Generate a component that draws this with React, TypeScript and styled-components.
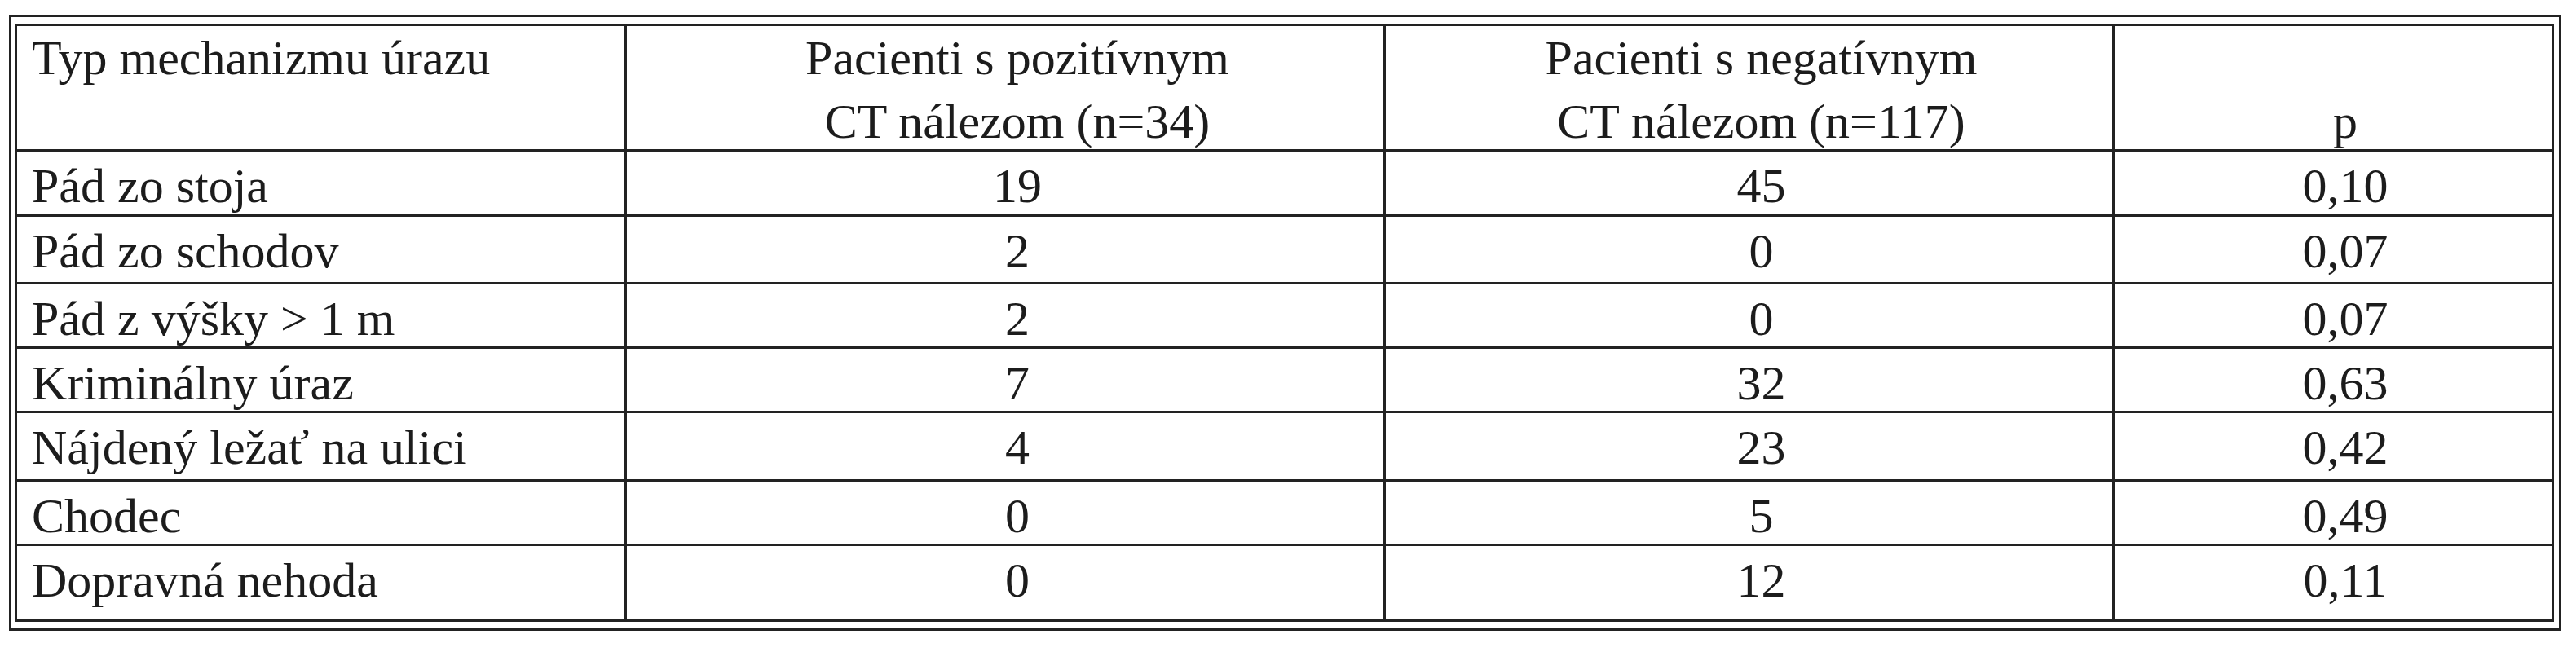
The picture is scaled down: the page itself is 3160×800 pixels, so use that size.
import React from "react";
import styled, { createGlobalStyle } from "styled-components";

const LINE = "#222";
const INK = "#1c1c1c";

// column inner widths and row inner heights, lines are 3px
const COLUMNS = [745, 928, 891, 536];
const ROWS = [151, 77, 80, 76, 76, 81, 76, 90];

const header = [
  { lines: ["Typ mechanizmu úrazu"], align: "left" as const },
  { lines: ["Pacienti s pozitívnym", "CT nálezom (n=34)"], align: "center" as const },
  { lines: ["Pacienti s negatívnym", "CT nálezom (n=117)"], align: "center" as const },
  { lines: ["p"], align: "center" as const, bottom: true },
];

const rows = [
  ["Pád zo stoja", "19", "45", "0,10"],
  ["Pád zo schodov", "2", "0", "0,07"],
  ["Pád z výšky > 1 m", "2", "0", "0,07"],
  ["Kriminálny úraz", "7", "32", "0,63"],
  ["Nájdený ležať na ulici", "4", "23", "0,42"],
  ["Chodec", "0", "5", "0,49"],
  ["Dopravná nehoda", "0", "12", "0,11"],
];

const GlobalStyle = createGlobalStyle`
  html, body {
    margin: 0;
    background: #fff;
  }
  body {
    font-family: "Liberation Serif", "Times New Roman", serif;
  }
`;

const Page = styled.div`
  padding: 18px 0 0 11px;
`;

const Frame = styled.div`
  display: inline-block;
  border: 3px solid ${LINE};
  padding: 8px 6px 8px 4px;
`;

const Grid = styled.div`
  display: grid;
  grid-template-columns: ${COLUMNS.map((w) => `${w}px`).join(" ")};
  grid-template-rows: ${ROWS.map((h) => `${h}px`).join(" ")};
  gap: 3px;
  padding: 3px;
  background: ${LINE};
`;

const Cell = styled.div<{ $align: "left" | "center" }>`
  background: #fff;
  color: ${INK};
  font-size: 60px;
  white-space: nowrap;
  text-align: ${(p) => p.$align};
  padding-left: ${(p) => (p.$align === "left" ? "18px" : "30px")};
`;

const HeadCell = styled(Cell)<{ $bottom?: boolean }>`
  line-height: 78px;
  padding-top: ${(p) => (p.$bottom ? "78px" : "0")};
`;

const BodyCell = styled(Cell)`
  line-height: 60px;
  padding-top: 12px;
`;

const Line = styled.div`
  display: block;
`;

export default function App() {
  return (
    <>
      <GlobalStyle />
      <Page>
        <Frame>
          <Grid>
            {header.map((h, i) => (
              <HeadCell key={i} $align={h.align} $bottom={h.bottom}>
                {h.lines.map((l) => (
                  <Line key={l}>{l}</Line>
                ))}
              </HeadCell>
            ))}
            {rows.map((r) =>
              r.map((v, i) => (
                <BodyCell key={r[0] + i} $align={i === 0 ? "left" : "center"}>
                  {v}
                </BodyCell>
              ))
            )}
          </Grid>
        </Frame>
      </Page>
    </>
  );
}
